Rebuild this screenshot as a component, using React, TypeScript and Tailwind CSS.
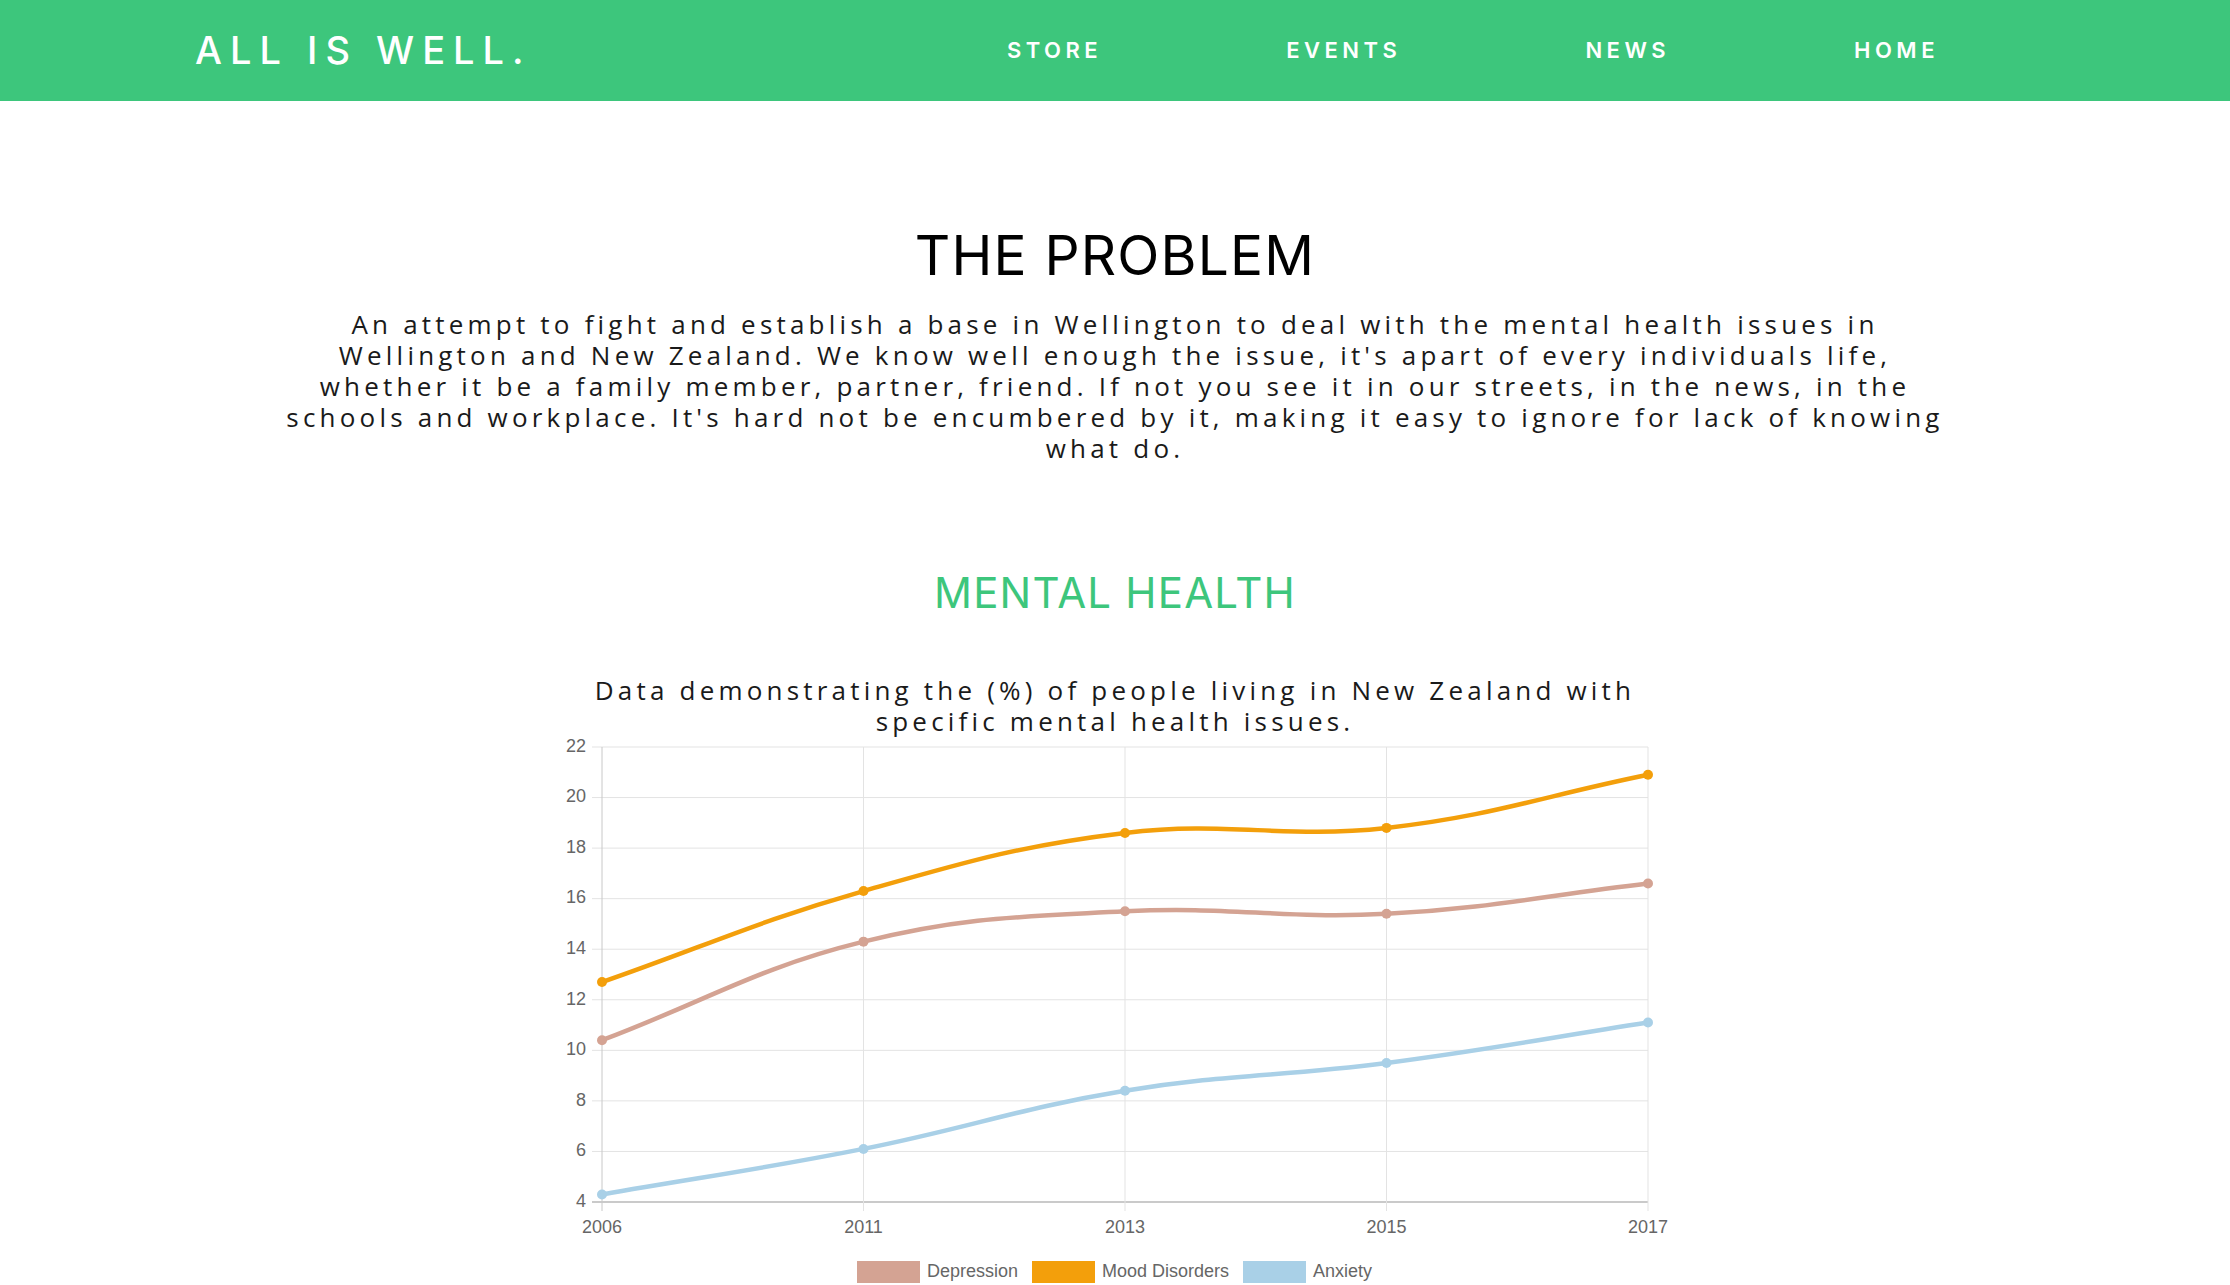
import React from "react";

const NAV = ["STORE", "EVENTS", "NEWS", "HOME"];

const YEARS = ["2006", "2011", "2013", "2015", "2017"];

const SERIES = [
  { label: "Depression", color: "#d4a393", data: [10.4, 14.3, 15.5, 15.4, 16.6] },
  { label: "Mood Disorders", color: "#f39f0b", data: [12.7, 16.3, 18.6, 18.8, 20.9] },
  { label: "Anxiety", color: "#a9d0e7", data: [4.3, 6.1, 8.4, 9.5, 11.1] },
];

// plot area inside the svg
const X0 = 42;
const X1 = 1088;
const Y0 = 15;
const Y1 = 470;

const xOf = (i: number) => X0 + (i * (X1 - X0)) / 4;
const yOf = (v: number) => Y0 + ((22 - v) / 18) * (Y1 - Y0);

type Pt = { x: number; y: number };

// same curve as chart.js with tension 0.4
function spline(prev: Pt, cur: Pt, next: Pt, t: number) {
  const d01 = Math.hypot(cur.x - prev.x, cur.y - prev.y);
  const d12 = Math.hypot(next.x - cur.x, next.y - cur.y);
  const s01 = d01 / (d01 + d12 || 1);
  const s12 = d12 / (d01 + d12 || 1);
  const fa = t * s01;
  const fb = t * s12;
  return {
    prev: { x: cur.x - fa * (next.x - prev.x), y: cur.y - fa * (next.y - prev.y) },
    next: { x: cur.x + fb * (next.x - prev.x), y: cur.y + fb * (next.y - prev.y) },
  };
}

function linePath(data: number[]) {
  const pts = data.map((v, i) => ({ x: xOf(i), y: yOf(v) }));
  const cps = pts.map((p, i) =>
    spline(pts[i - 1] ?? p, p, pts[i + 1] ?? p, 0.4)
  );
  let d = `M${pts[0].x},${pts[0].y}`;
  for (let i = 1; i < pts.length; i++) {
    const a = cps[i - 1].next;
    const b = cps[i].prev;
    d += ` C${a.x},${a.y} ${b.x},${b.y} ${pts[i].x},${pts[i].y}`;
  }
  return d;
}

function Chart() {
  const ticks = [22, 20, 18, 16, 14, 12, 10, 8, 6, 4];
  const legend = [
    { x: 297, tx: 367 },
    { x: 472, tx: 542 },
    { x: 683, tx: 753 },
  ];

  return (
    <svg width={1110} height={555} viewBox="0 0 1110 555" className="block -mt-[5px]">
      {/* grid */}
      {ticks.map((t) => (
        <line
          key={t}
          x1={X0 - 10}
          x2={X1}
          y1={yOf(t)}
          y2={yOf(t)}
          stroke={t === 4 ? "#b8b8b8" : "#e3e3e3"}
          strokeWidth={t === 4 ? 1.5 : 1}
        />
      ))}
      {YEARS.map((y, i) => (
        <line
          key={y}
          x1={xOf(i)}
          x2={xOf(i)}
          y1={Y0}
          y2={Y1 + 9}
          stroke={i === 0 ? "#c8c8c8" : "#e3e3e3"}
          strokeWidth={1}
        />
      ))}

      {/* labels */}
      {ticks.map((t) => (
        <text
          key={t}
          x={26}
          y={yOf(t)}
          textAnchor="end"
          dominantBaseline="middle"
          fill="#666"
          fontSize={18}
          fontFamily="'Liberation Sans', Arial, sans-serif"
        >
          {t}
        </text>
      ))}
      {YEARS.map((y, i) => (
        <text
          key={y}
          x={xOf(i)}
          y={501}
          textAnchor="middle"
          fill="#666"
          fontSize={18}
          fontFamily="'Liberation Sans', Arial, sans-serif"
        >
          {y}
        </text>
      ))}

      {/* lines */}
      {SERIES.map((s) => (
        <g key={s.label}>
          <path d={linePath(s.data)} fill="none" stroke={s.color} strokeWidth={4.5} />
          {s.data.map((v, i) => (
            <circle key={i} cx={xOf(i)} cy={yOf(v)} r={5} fill={s.color} />
          ))}
        </g>
      ))}

      {/* legend */}
      {SERIES.map((s, i) => (
        <g key={s.label}>
          <rect x={legend[i].x} y={529} width={63} height={22} fill={s.color} />
          <text
            x={legend[i].tx}
            y={540}
            dominantBaseline="middle"
            fill="#666"
            fontSize={18}
            fontFamily="'Liberation Sans', Arial, sans-serif"
          >
            {s.label}
          </text>
        </g>
      ))}
    </svg>
  );
}

export default function App() {
  return (
    <div className="min-h-screen bg-white">
      {/* Header */}
      <header className="h-[101px] bg-[#3dc67c] flex items-center justify-between pl-[195px] pr-[291px]">
        <div
          className="text-white text-[38px] font-medium tracking-[8px]"
          style={{ fontFamily: "Inter, sans-serif" }}
        >
          ALL IS WELL.
        </div>
        <nav className="flex items-center gap-[184px]">
          {NAV.map((item) => (
            <a
              key={item}
              href="#"
              className="text-white text-[22px] font-semibold tracking-[4.5px]"
              style={{ fontFamily: "Inter, sans-serif" }}
            >
              {item}
            </a>
          ))}
        </nav>
      </header>

      {/* Problem */}
      <section className="flex flex-col items-center">
        <h1
          className="mt-[127px] text-[55px] leading-none font-normal tracking-[1.2px] text-black"
          style={{ fontFamily: "Inter, sans-serif" }}
        >
          THE PROBLEM
        </h1>
        <p
          className="mt-[26px] text-center text-[26px] leading-[31px] font-normal tracking-[4.2px] text-[#1a1a1a]"
          style={{ fontFamily: "'Open Sans', sans-serif" }}
        >
          An attempt to fight and establish a base in Wellington to deal with the mental health issues in
          <br />
          Wellington and New Zealand. We know well enough the issue, it's apart of every individuals life,
          <br />
          whether it be a family member, partner, friend. If not you see it in our streets, in the news, in the
          <br />
          schools and workplace. It's hard not be encumbered by it, making it easy to ignore for lack of knowing
          <br />
          what do.
        </p>

        <h2
          className="mt-[108px] text-[42px] leading-none font-normal tracking-[1.2px] text-[#3dc67c]"
          style={{ fontFamily: "Inter, sans-serif" }}
        >
          MENTAL HEALTH
        </h2>
        <p
          className="mt-[61px] text-center text-[26px] leading-[31px] font-normal tracking-[4.2px] text-[#1a1a1a]"
          style={{ fontFamily: "'Open Sans', sans-serif" }}
        >
          Data demonstrating the (%) of people living in New Zealand with
          <br />
          specific mental health issues.
        </p>
        <Chart />
      </section>
    </div>
  );
}
